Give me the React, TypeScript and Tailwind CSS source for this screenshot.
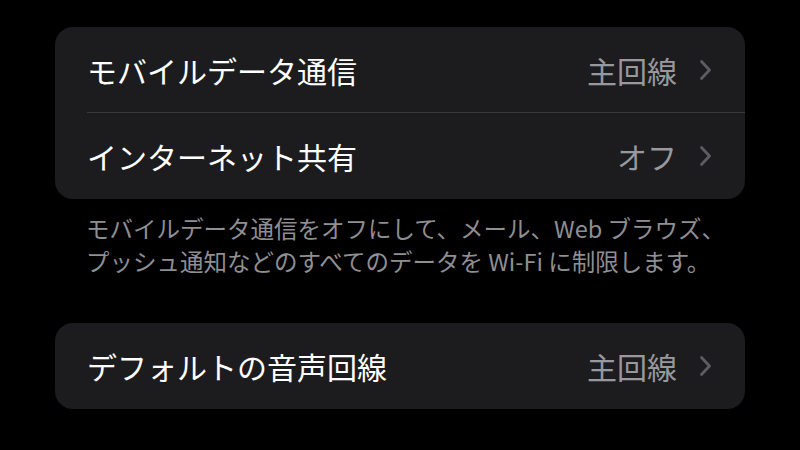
import React from "react";

const Chevron = () => (
  <svg width="13" height="22" viewBox="0 0 13 22" fill="none" className="ml-[22px]">
    <path d="M2.5 2.5 L10.5 11 L2.5 19.5" stroke="#5d5d62" strokeWidth="2.8" strokeLinecap="round" strokeLinejoin="round" />
  </svg>
);

const Row = ({ label, value, sep }: { label: string; value: string; sep?: boolean }) => (
  <div className="relative flex items-center h-[86px] pl-[32px] pr-[33px]">
    <span className="text-[30px] text-white leading-none">{label}</span>
    <span className="ml-auto text-[30px] text-[#98989e] leading-none">{value}</span>
    <Chevron />
    {sep && <div className="absolute left-[32px] right-0 bottom-0 h-px bg-[#38383a]" />}
  </div>
);

export default function App() {
  return (
    <div
      className="w-[800px] h-[450px] bg-black overflow-hidden pt-[27px]"
      style={{ fontFamily: '"Noto Sans CJK JP", "Noto Sans", sans-serif' }}
    >
      <div className="mx-[55px] rounded-[18px] bg-[#1c1c1e]">
        <Row label="モバイルデータ通信" value="主回線" sep />
        <Row label="インターネット共有" value="オフ" />
      </div>
      <div className="mx-[55px] pl-[31px] pt-[13px] text-[23.5px] leading-[33px] text-[#8e8e93] whitespace-nowrap">
        モバイルデータ通信をオフにして、メール、Web ブラウズ、
        <br />
        プッシュ通知などのすべてのデータを Wi-Fi に制限します。
      </div>
      <div className="mx-[55px] mt-[45px] rounded-[18px] bg-[#1c1c1e]">
        <Row label="デフォルトの音声回線" value="主回線" />
      </div>
    </div>
  );
}
